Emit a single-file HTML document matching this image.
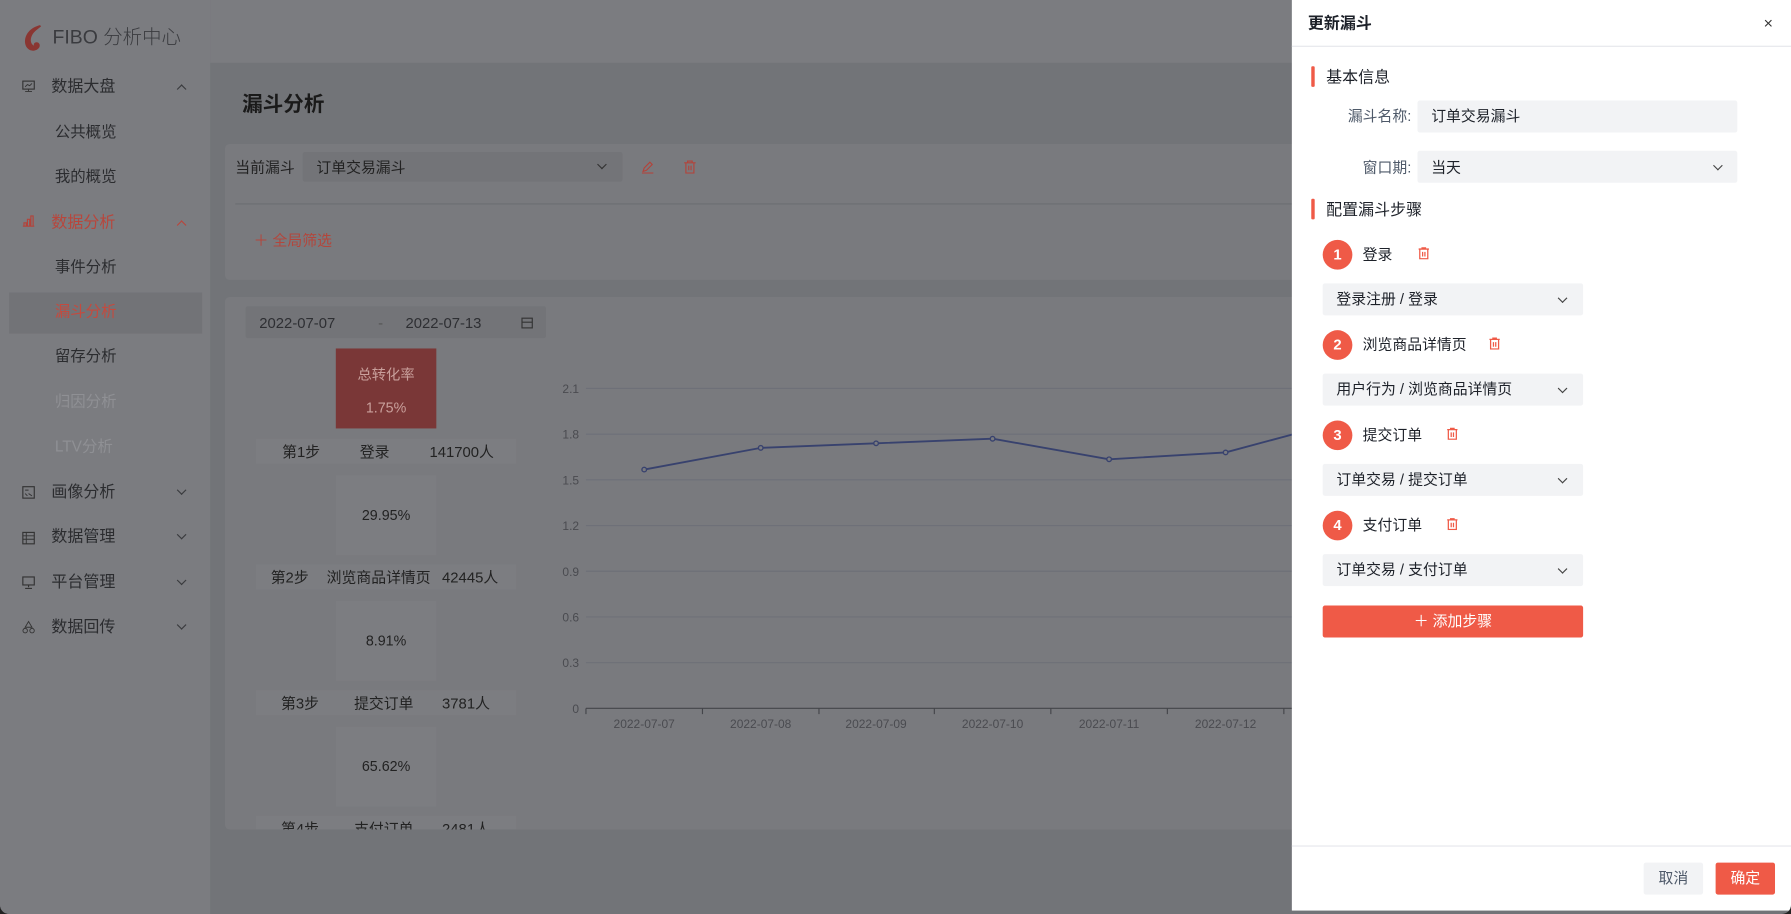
<!DOCTYPE html>
<html><head><meta charset="utf-8">
<style>
*{box-sizing:border-box;margin:0;padding:0}
html,body{width:1791px;height:914px;overflow:hidden;background:#222;}
body{font-family:"Liberation Sans","Noto Sans CJK SC",sans-serif;}
#w{position:absolute;left:0;top:0;width:1568px;height:800px;transform:scale(1.14222,1.1425);transform-origin:0 0;overflow:hidden;background:#727478;border-radius:0 0 8px 8px}
.a{position:absolute}
.t{position:absolute;white-space:nowrap;font-size:13px;line-height:16px}
.side{left:0;top:0;width:184px;height:800px;background:#7b7c80}
.menu{color:#2b2c2f;font-size:14px}
.sub{color:#2b2c2f;font-size:13.5px}
.chev{position:absolute;width:6px;height:6px;border-right:1px solid #3a3b3e;border-bottom:1px solid #3a3b3e}
.sel{position:absolute;background:#f2f3f5;border-radius:2px}
.dchev{position:absolute;width:6px;height:6px;border-right:1.3px solid #444;border-bottom:1.3px solid #444;transform:rotate(45deg)}
.circ{position:absolute;width:26px;height:26px;border-radius:13px;background:#ef5a47;color:#fff;font-weight:bold;font-size:13px;text-align:center;line-height:26px}
.row{position:absolute;left:224px;width:228px;height:22px;background:#7c7d81;font-size:12.5px;color:#222}
.box{position:absolute;left:294px;width:88px;height:70px;background:#7c7d81;font-size:12.5px;color:#222;text-align:center;line-height:70px}
</style></head><body>
<div id="w">
<div class="a" style="left:184px;top:0;width:1384px;height:55px;background:#7b7c80"></div>
<div class="a side"></div>
<svg class="a" style="left:19px;top:21px" width="22" height="26" viewBox="0 0 22 26"><path d="M16 1C8 3 2 9 3 17c1 6 7 8 11 5 3-2 2-6-1-6-2 0-3 2-2 3-3-1-4-5-2-9 2-4 6-6 8-8z" fill="#8a3632"/></svg>
<div class="t" style="left:46px;top:23px;font-size:17px;line-height:20px;color:#3a3b3f;font-weight:300">FIBO 分析中心</div>
<svg class="a" style="left:19px;top:70px" width="12" height="11"><rect x="1" y="1" width="10" height="7" fill="none" stroke="#333" stroke-width="1"/><path d="M6 8v2M3 10h6M3 6l2-2 2 1 2-2" stroke="#333" fill="none" stroke-width="0.8"/></svg>
<div class="t menu" style="left:45px;top:67px">数据大盘</div><div class="chev" style="left:156px;top:75px;transform:rotate(-135deg)"></div>
<div class="t sub" style="left:48px;top:108px">公共概览</div>
<div class="t sub" style="left:48px;top:147px">我的概览</div>
<svg class="a" style="left:19px;top:187px" width="12" height="12"><path d="M1 11h10M2 11V8h2v3M5 11V5h2v6M8 11V2h2v9" stroke="#b3433a" fill="none" stroke-width="1"/></svg>
<div class="t menu" style="left:45px;top:186px;color:#b8463c">数据分析</div><div class="chev" style="left:156px;top:194px;transform:rotate(-135deg);border-color:#b8463c"></div>
<div class="t sub" style="left:48px;top:226px">事件分析</div>
<div class="a" style="left:8px;top:256px;width:169px;height:36px;background:#727377"></div>
<div class="t sub" style="left:48px;top:265px;color:#c54a3e">漏斗分析</div>
<div class="t sub" style="left:48px;top:304px">留存分析</div>
<div class="t sub" style="left:48px;top:344px;color:#8f9094">归因分析</div>
<div class="t sub" style="left:48px;top:383px;color:#8f9094">LTV分析</div>
<svg class="a" style="left:19px;top:425px" width="12" height="12"><rect x="1" y="1" width="10" height="10" fill="none" stroke="#333"/><path d="M3 4h3M3 7l2 2M6 7l3 2" stroke="#333" stroke-width=".8"/></svg>
<div class="t menu" style="left:45px;top:422px">画像分析</div><div class="chev" style="left:156px;top:426px;transform:rotate(45deg)"></div>
<svg class="a" style="left:19px;top:465px" width="12" height="12"><rect x="1" y="1" width="10" height="10" fill="none" stroke="#333"/><path d="M1 4h10M1 7h10M4 1v10" stroke="#333" stroke-width=".8"/></svg>
<div class="t menu" style="left:45px;top:461px">数据管理</div><div class="chev" style="left:156px;top:465px;transform:rotate(45deg)"></div>
<svg class="a" style="left:19px;top:504px" width="12" height="12"><rect x="1" y="1" width="10" height="7" fill="none" stroke="#333"/><path d="M6 8v2M3 11h6" stroke="#333"/></svg>
<div class="t menu" style="left:45px;top:501px">平台管理</div><div class="chev" style="left:156px;top:505px;transform:rotate(45deg)"></div>
<svg class="a" style="left:19px;top:543px" width="12" height="12"><path d="M6 1l3 5H3zM3 7a2 2 0 1 0 .1 0M9 7a2 2 0 1 0 .1 0" stroke="#333" fill="none" stroke-width=".8"/></svg>
<div class="t menu" style="left:45px;top:540px">数据回传</div><div class="chev" style="left:156px;top:544px;transform:rotate(45deg)"></div>

<div class="t" style="left:212px;top:80px;font-size:18px;line-height:22px;font-weight:bold;color:#1a1a1a">漏斗分析</div>
<div class="a" style="left:197px;top:126px;width:1000px;height:119px;background:#797a7e;border-radius:4px"></div>
<div class="t" style="left:206px;top:139px;color:#222">当前漏斗</div>
<div class="a" style="left:265px;top:133px;width:280px;height:26px;background:#737478;border-radius:2px"></div>
<div class="t" style="left:277px;top:139px;color:#222">订单交易漏斗</div>
<div class="dchev" style="left:524px;top:141px;border-color:#333"></div>
<svg class="a" style="left:561px;top:140px" width="12" height="12"><path d="M2 10l1-3 5-5 2 2-5 5zM1 11.5h10" stroke="#b3433a" fill="none" stroke-width="1"/></svg>
<svg class="a" style="left:598px;top:140px" width="12" height="12"><path d="M1 2.5h10M4 2.5V1h4v1.5M2.5 2.5v9h7v-9M5 5v4M7 5v4" stroke="#b3433a" fill="none" stroke-width="1"/></svg>
<div class="a" style="left:206px;top:178px;width:990px;height:1px;background:#6c6d71"></div>
<div class="t" style="left:222px;top:203px;color:#b3463c;font-size:13px">＋ 全局筛选</div>

<div class="a" style="left:197px;top:260px;width:1000px;height:466px;background:#797a7e;border-radius:4px"></div>
<div class="a" style="left:215px;top:268px;width:263px;height:28px;background:#737478;border-radius:2px"></div>
<div class="t" style="left:227px;top:275px;color:#2e2f33">2022-07-07</div>
<div class="t" style="left:331px;top:275px;color:#555">-</div>
<div class="t" style="left:355px;top:275px;color:#2e2f33">2022-07-13</div>
<svg class="a" style="left:456px;top:277px" width="11" height="11"><rect x="1" y="1.5" width="9" height="8.5" fill="none" stroke="#333"/><path d="M1 5h9" stroke="#333"/></svg>
<div class="a" style="left:294px;top:305px;width:88px;height:70px;background:#7a3737;color:#c9a09c;text-align:center;font-size:12.5px">
<div style="margin-top:12px">总转化率</div><div style="margin-top:14px">1.75%</div></div>
<div class="row" style="top:384px"><span class="t" style="left:23px;top:4px">第1步</span><span class="t" style="left:91px;top:4px">登录</span><span class="t" style="left:152px;top:4px">141700人</span></div>
<div class="box" style="top:416px">29.95%</div>
<div class="row" style="top:494px"><span class="t" style="left:13px;top:4px">第2步</span><span class="t" style="left:62px;top:4px">浏览商品详情页</span><span class="t" style="left:163px;top:4px">42445人</span></div>
<div class="box" style="top:526px">8.91%</div>
<div class="row" style="top:604px"><span class="t" style="left:22px;top:4px">第3步</span><span class="t" style="left:86px;top:4px">提交订单</span><span class="t" style="left:163px;top:4px">3781人</span></div>
<div class="box" style="top:636px">65.62%</div>
<div class="row" style="top:714px;height:12px;overflow:hidden"><span class="t" style="left:22px;top:4px">第4步</span><span class="t" style="left:86px;top:4px">支付订单</span><span class="t" style="left:163px;top:4px">2481人</span></div>

<svg class="a" style="left:480px;top:330px" width="660" height="320" font-family="Liberation Sans" font-size="10.5" fill="#4a4b50">
<g stroke="#6e7078" stroke-width="1">
<path d="M33 10h620M33 50h620M33 90h620M33 130h620M33 170h620M33 210h620M33 250h620"/>
</g>
<path d="M33 290h620M33 290v5M135 290v5M237 290v5M338 290v5M440 290v5M542 290v5M644 290v5" stroke="#44454a"/>
<g text-anchor="end"><text x="27" y="14">2.1</text><text x="27" y="54">1.8</text><text x="27" y="94">1.5</text><text x="27" y="134">1.2</text><text x="27" y="174">0.9</text><text x="27" y="214">0.6</text><text x="27" y="254">0.3</text><text x="27" y="294">0</text></g>
<g text-anchor="middle"><text x="84" y="307">2022-07-07</text><text x="186" y="307">2022-07-08</text><text x="287" y="307">2022-07-09</text><text x="389" y="307">2022-07-10</text><text x="491" y="307">2022-07-11</text><text x="593" y="307">2022-07-12</text></g>
<polyline points="84,81 186,62 287,58 389,54 491,72 593,66 660,48" fill="none" stroke="#38426e" stroke-width="1.6"/>
<g fill="#7a7b7f" stroke="#38426e" stroke-width="1.2"><circle cx="84" cy="81" r="2"/><circle cx="186" cy="62" r="2"/><circle cx="287" cy="58" r="2"/><circle cx="389" cy="54" r="2"/><circle cx="491" cy="72" r="2"/><circle cx="593" cy="66" r="2"/></g>
</svg>

<div class="a" style="left:1131px;top:0;width:437px;height:797px;background:#fff"></div>
<div class="t" style="left:1145px;top:12px;font-size:14px;color:#1d2129;font-weight:bold">更新漏斗</div>
<div class="t" style="left:1544px;top:12px;font-size:14px;color:#333">×</div>
<div class="a" style="left:1131px;top:40px;width:437px;height:1px;background:#e5e6eb"></div>
<div class="a" style="left:1148px;top:58px;width:3px;height:18px;background:#ef5a47;border-radius:1px"></div>
<div class="t" style="left:1161px;top:59px;font-size:14px;color:#1d2129">基本信息</div>
<div class="t" style="left:1180px;top:94px;color:#4e5969">漏斗名称:</div>
<div class="sel" style="left:1241px;top:88px;width:280px;height:28px"></div>
<div class="t" style="left:1253px;top:94px;color:#1d2129">订单交易漏斗</div>
<div class="t" style="left:1193px;top:139px;color:#4e5969">窗口期:</div>
<div class="sel" style="left:1241px;top:132px;width:280px;height:28px"></div>
<div class="t" style="left:1253px;top:139px;color:#1d2129">当天</div>
<div class="dchev" style="left:1501px;top:142px"></div>
<div class="a" style="left:1148px;top:174px;width:3px;height:18px;background:#ef5a47;border-radius:1px"></div>
<div class="t" style="left:1161px;top:175px;font-size:14px;color:#1d2129">配置漏斗步骤</div>

<div class="circ" style="left:1158px;top:210px">1</div>
<div class="t" style="left:1193px;top:215px;color:#1d2129">登录</div>
<svg class="a" style="left:1241px;top:216px" width="11" height="11"><path d="M1 2h9M4 2V1h3v1M2 2v8.5h7V2M4.5 4.5v4M6.5 4.5v4" stroke="#ef5a47" fill="none" stroke-width="1.1"/></svg>
<div class="sel" style="left:1158px;top:248px;width:228px;height:28px"></div>
<div class="t" style="left:1170px;top:254px;color:#1d2129">登录注册 / 登录</div>
<div class="dchev" style="left:1365px;top:258px"></div>

<div class="circ" style="left:1158px;top:289px">2</div>
<div class="t" style="left:1193px;top:294px;color:#1d2129">浏览商品详情页</div>
<svg class="a" style="left:1303px;top:295px" width="11" height="11"><path d="M1 2h9M4 2V1h3v1M2 2v8.5h7V2M4.5 4.5v4M6.5 4.5v4" stroke="#ef5a47" fill="none" stroke-width="1.1"/></svg>
<div class="sel" style="left:1158px;top:327px;width:228px;height:28px"></div>
<div class="t" style="left:1170px;top:333px;color:#1d2129">用户行为 / 浏览商品详情页</div>
<div class="dchev" style="left:1365px;top:337px"></div>

<div class="circ" style="left:1158px;top:368px">3</div>
<div class="t" style="left:1193px;top:373px;color:#1d2129">提交订单</div>
<svg class="a" style="left:1266px;top:374px" width="11" height="11"><path d="M1 2h9M4 2V1h3v1M2 2v8.5h7V2M4.5 4.5v4M6.5 4.5v4" stroke="#ef5a47" fill="none" stroke-width="1.1"/></svg>
<div class="sel" style="left:1158px;top:406px;width:228px;height:28px"></div>
<div class="t" style="left:1170px;top:412px;color:#1d2129">订单交易 / 提交订单</div>
<div class="dchev" style="left:1365px;top:416px"></div>

<div class="circ" style="left:1158px;top:447px">4</div>
<div class="t" style="left:1193px;top:452px;color:#1d2129">支付订单</div>
<svg class="a" style="left:1266px;top:453px" width="11" height="11"><path d="M1 2h9M4 2V1h3v1M2 2v8.5h7V2M4.5 4.5v4M6.5 4.5v4" stroke="#ef5a47" fill="none" stroke-width="1.1"/></svg>
<div class="sel" style="left:1158px;top:485px;width:228px;height:28px"></div>
<div class="t" style="left:1170px;top:491px;color:#1d2129">订单交易 / 支付订单</div>
<div class="dchev" style="left:1365px;top:495px"></div>

<div class="a" style="left:1158px;top:530px;width:228px;height:28px;background:#ef5a47;border-radius:2px;color:#fff;font-size:13px;text-align:center;line-height:28px">＋ 添加步骤</div>

<div class="a" style="left:1131px;top:740px;width:437px;height:1px;background:#e5e6eb"></div>
<div class="a" style="left:1439px;top:755px;width:52px;height:28px;background:#f2f3f5;border-radius:2px;color:#4e5969;font-size:13px;text-align:center;line-height:28px">取消</div>
<div class="a" style="left:1502px;top:755px;width:52px;height:28px;background:#ef5a47;border-radius:2px;color:#fff;font-size:13px;text-align:center;line-height:28px">确定</div>
</div>
</body></html>
